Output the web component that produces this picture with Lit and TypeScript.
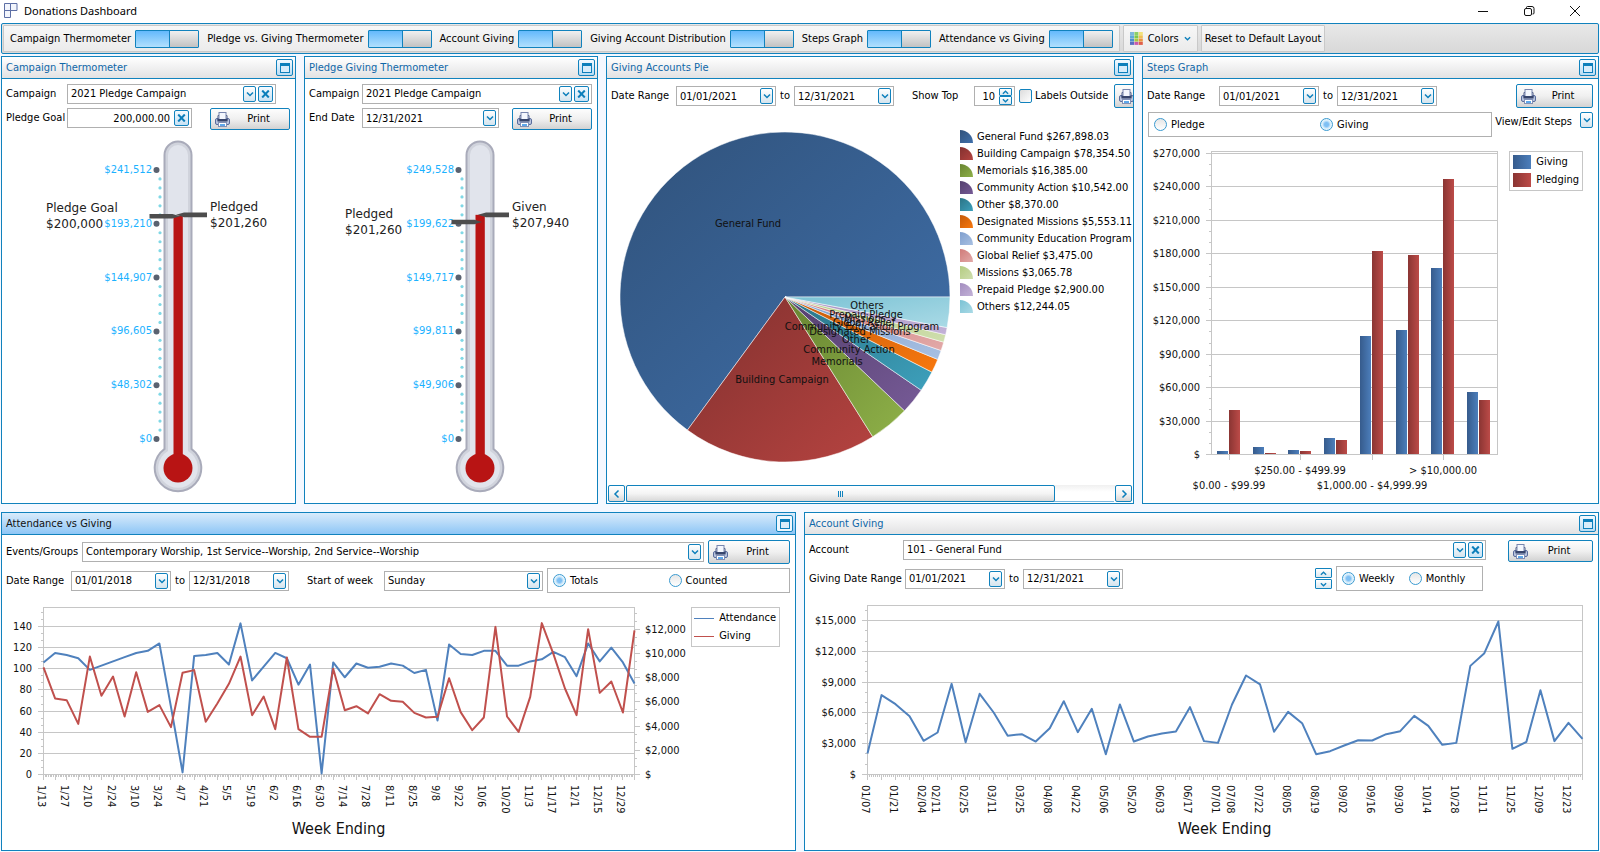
import { LitElement, html, svg, css, nothing, TemplateResult } from "lit";
import { customElement, property, state } from "lit/decorators.js";

const base = css`
  * { box-sizing: border-box; }
  :host {
    display: block;
    font-family: "DejaVu Sans Condensed", "DejaVu Sans", sans-serif;
    font-stretch: condensed;
    font-size: 11px;
    line-height: 14px;
    color: #000;
  }
  text { font-size: 11px; fill: #111; }
  .grid { stroke: #c6c6c6; stroke-width: 1; fill: none; shape-rendering: crispEdges; }
  .title { font-size: 16px; }
`;

/* Redraws its SVG whenever the space given to it changes. */
class ChartElement extends LitElement {
  @state() w = 0;
  @state() h = 0;
  private watcher?: ResizeObserver;

  connectedCallback() {
    super.connectedCallback();
    this.watcher = new ResizeObserver(() => {
      this.w = Math.floor(this.clientWidth);
      this.h = Math.floor(this.clientHeight);
    });
    this.watcher.observe(this);
  }

  disconnectedCallback() {
    this.watcher?.disconnect();
    super.disconnectedCallback();
  }

  draw(): unknown { return nothing; }

  render() {
    if (this.w < 40 || this.h < 40) return nothing;
    return html`<svg class="canvas" width=${this.w} height=${this.h}>${this.draw()}</svg>`;
  }
}

const chartHost = css`
  :host { min-width: 0; min-height: 0; overflow: hidden; }
  .canvas { display: block; }
`;

const money = (v: number) => (v === 0 ? "$" : "$" + v.toLocaleString("en-US"));

@customElement("thermo-chart")
class ThermoChart extends ChartElement {
  @property({ attribute: false }) scale: number[] = [];
  @property({ attribute: false }) left = { label: "", value: 0, x: 0 };
  @property({ attribute: false }) right = { label: "", value: 0 };
  @property({ type: Number }) level = 0;

  static styles = [base, chartHost, css`
    text { font-family: "DejaVu Sans", sans-serif; font-stretch: normal; }
    .scale { font-size: 10px; fill: #1cb2ff; }
    .mark { font-size: 12px; fill: #222; }
    .dot { fill: #5a6270; }
    .tiny { fill: #80d8e6; }
    .flag { fill: #4d4d4d; }
    .mercury { fill: #b81414; }
  `];

  draw() {
    const cx = Math.round(this.w / 2) + 29;
    const top = 36, cap = 21, zero = this.h - 64, bulb = zero + 29;
    const max = this.scale[0];
    const y = (v: number) => zero - (v / max) * (zero - top);
    const step = (zero - top) / 5;
    const shell = (r: number, R: number) => {
      const neck = bulb - Math.sqrt(R * R - r * r);
      return `M${cx - r} ${neck}V${cap}A${r} ${r} 0 0 1 ${cx + r} ${cap}V${neck}A${R} ${R} 0 1 1 ${cx - r} ${neck}Z`;
    };
    const ly = y(this.left.value), ry = y(this.right.value);
    return svg`
      <path d=${shell(14.5, 24.3)} fill="#a9abba"></path>
      <path d=${shell(12.5, 22.3)} fill="#d0d3dc"></path>
      <path d=${shell(10, 19.8)} fill="#e1e4ec"></path>
      ${this.scale.map((v, i) => svg`
        <text class="scale" text-anchor="end" x=${cx - 26} y=${top + step * i + 3}>${v ? money(v) : "$0"}</text>
        <circle class="dot" cx=${cx - 21.5} cy=${top + step * i} r="3"></circle>
        ${i < 5 ? [1, 2, 3, 4, 5].map((k) => svg`<circle class="tiny" cx=${cx - 18} cy=${top + step * (i + k / 6)} r="1.6"></circle>`) : nothing}`)}
      <rect class="mercury" x=${cx - 4.5} y=${y(this.level)} width="9.3" height=${bulb - y(this.level)}></rect>
      <circle class="mercury" cx=${cx} cy=${bulb} r="14.5"></circle>
      <path class="flag" d="M${cx - 28.5} ${ly - 2.3}h23l7.5 2.3l-7.5 2.3h-23z"></path>
      <path class="flag" d="M${cx + 29} ${ry - 2.3}h-23l-8 2.3l8 2.3h23z"></path>
      <text class="mark" x=${cx + this.left.x} y=${ly - 4}>${this.left.label}</text>
      <text class="mark" x=${cx + this.left.x} y=${ly + 12}>${money(this.left.value)}</text>
      <text class="mark" x=${cx + 32} y=${ry - 4}>${this.right.label}</text>
      <text class="mark" x=${cx + 32} y=${ry + 12}>${money(this.right.value)}</text>`;
  }
}

interface Slice { name: string; value: number; from: string; to: string; }

@customElement("pie-chart")
class PieChart extends ChartElement {
  @property({ attribute: false }) slices: Slice[] = [];

  static styles = [base, chartHost, css`
    .slice { stroke: #fff; stroke-opacity: 0.5; stroke-width: 1; }
  `];

  draw() {
    const cx = this.w / 2 + 1, cy = 185, r = Math.min(this.w / 2 - 11, 165);
    const total = this.slices.reduce((a, s) => a + s.value, 0);
    let angle = 0;
    const parts = this.slices.map((s) => {
      const from = angle;
      angle -= (s.value / total) * Math.PI * 2;
      return { s, a: from, b: angle, mid: (from + angle) / 2 };
    });
    const at = (a: number, d: number) => [cx + Math.cos(a) * d, cy + Math.sin(a) * d];
    return svg`
      <defs>${parts.map(({ s }, i) => svg`
        <linearGradient id="g${i}" x1="0" y1="0" x2="1" y2="1">
          <stop offset="0" stop-color=${s.from}></stop><stop offset="1" stop-color=${s.to}></stop>
        </linearGradient>`)}</defs>
      ${parts.map(({ a, b }, i) => {
        const [x1, y1] = at(a, r), [x2, y2] = at(b, r);
        return svg`<path class="slice" fill="url(#g${i})" d="M${cx} ${cy}L${x1} ${y1}A${r} ${r} 0 ${a - b > Math.PI ? 1 : 0} 0 ${x2} ${y2}Z"></path>`;
      })}
      ${parts.map(({ s, mid }) => {
        const [x, y] = at(mid, r / 2);
        return svg`<text text-anchor="middle" x=${Math.round(x)} y=${Math.round(y + 4)}>${s.name}</text>`;
      })}`;
  }
}

@customElement("bar-chart")
class BarChart extends ChartElement {
  @property({ attribute: false }) pairs: number[][] = [];
  @property({ attribute: false }) names: string[] = [];

  static styles = [base, chartHost];

  draw() {
    const l = 68, r = this.w - 2, t = 10, b = this.h - 49;
    const y = (v: number) => Math.round(b - (v / 271800) * (b - t));
    const slot = (r - l) / this.pairs.length;
    const ticks = Array.from({ length: 28 }, (_, i) => i * 10000);
    return svg`
      <defs>
        <linearGradient id="blue"><stop offset="0" stop-color="#365b8c"></stop><stop offset="1" stop-color="#4c7ebb"></stop></linearGradient>
        <linearGradient id="red"><stop offset="0" stop-color="#8a3533"></stop><stop offset="1" stop-color="#bc4b48"></stop></linearGradient>
      </defs>
      <rect class="grid" x=${l + 0.5} y=${t + 0.5} width=${r - l} height=${b - t}></rect>
      ${ticks.map((v, i) => i % 3
        ? svg`<path class="grid" d="M${l - 2} ${y(v) + 0.5}H${l}"></path>`
        : svg`<path class="grid" d="M${l - 5} ${y(v) + 0.5}H${r}"></path>
            <text text-anchor="end" x=${l - 11} y=${y(v) + 4}>${money(v)}</text>`)}
      ${this.pairs.map(([give, pledge], i) => {
        const c = Math.round(l + slot * (i + 0.5));
        return svg`
          <rect fill="url(#blue)" x=${c - 12} y=${y(give)} width="11" height=${b - y(give)}></rect>
          <rect fill="url(#red)" x=${c} y=${y(pledge)} width="11" height=${b - y(pledge)}></rect>
          ${this.names[i] ? svg`
            <path class="grid" d="M${c + 0.5} ${b}v6"></path>
            <text text-anchor="middle" x=${c} y=${b + (i % 4 ? 20 : 35)}>${this.names[i]}</text>` : nothing}`;
      })}`;
  }
}

interface Axis { max: number; step: number; cash: boolean; }

@customElement("week-chart")
class WeekChart extends ChartElement {
  @property({ attribute: false }) first: number[] = [];
  @property({ attribute: false }) second: number[] = [];
  @property({ attribute: false }) axis: Axis = { max: 1, step: 1, cash: false };
  @property({ attribute: false }) rightAxis?: Axis;
  @property({ attribute: false }) weeks: Record<number, string> = {};
  @property({ type: Number }) inset = 41;
  @property({ type: Number }) end = 1;

  static styles = [base, chartHost, css`
    .line { fill: none; stroke-width: 2; stroke-linejoin: round; }
    .a { stroke: #4f81bd; }
    .b { stroke: #c0504d; }
  `];

  private scale(axis: Axis, y: (v: number) => number, l: number, r: number, onRight: boolean) {
    const n = Math.floor((axis.max * 3) / axis.step);
    return Array.from({ length: n + 1 }, (_, i) => {
      const v = (i * axis.step) / 3;
      const py = Math.round(y(v)) + 0.5;
      const major = i % 3 === 0;
      const text = axis.cash ? money(v) : String(v);
      if (onRight)
        return svg`<path class="grid" d="M${r} ${py}h${major ? 6 : 3}"></path>
          ${major ? svg`<text x=${r + 11} y=${py + 3.5}>${text}</text>` : nothing}`;
      return major
        ? svg`<path class="grid" d="M${l - 5} ${py}H${r}"></path><text text-anchor="end" x=${l - 11} y=${py + 3.5}>${text}</text>`
        : svg`<path class="grid" d="M${l - 2} ${py}H${l}"></path>`;
    });
  }

  draw() {
    const l = this.inset, r = this.w - this.end, t = 10, b = this.h - 76;
    const count = this.first.length - 1;
    const x = (i: number) => l + ((r - l) * i) / count;
    const y = (axis: Axis) => (v: number) => b - (v / axis.max) * (b - t);
    const points = (data: number[], axis: Axis) => data.map((v, i) => `${x(i) + 0.5},${y(axis)(v) + 0.5}`).join(" ");
    const days = Array.from({ length: count * 7 + 1 }, (_, i) => i);
    return svg`
      <rect class="grid" x=${l + 0.5} y=${t + 0.5} width=${r - l} height=${b - t}></rect>
      ${this.scale(this.axis, y(this.axis), l, r, false)}
      ${this.rightAxis ? this.scale(this.rightAxis, y(this.rightAxis), l, r, true) : nothing}
      ${days.map((d) => svg`<path class="grid" d="M${Math.round(x(d / 7)) + 0.5} ${b}v${d % 7 ? 3 : 6}"></path>`)}
      <polyline class="line a" points=${points(this.first, this.axis)}></polyline>
      ${this.rightAxis ? svg`<polyline class="line b" points=${points(this.second, this.rightAxis)}></polyline>` : nothing}
      ${Object.entries(this.weeks).map(([i, name]) =>
        svg`<text transform="translate(${Math.round(x(Number(i))) - 5} ${b + 11}) rotate(90)">${name}</text>`)}
      <text class="title" text-anchor="middle" x=${(l + r) / 2} y=${b + 60}>Week Ending</text>`;
  }
}

const SLICES: Slice[] = [
  { name: "General Fund", value: 267898.03, from: "#30527b", to: "#4070ab" },
  { name: "Building Campaign", value: 78354.5, from: "#82312f", to: "#b54340" },
  { name: "Memorials", value: 16385, from: "#688532", to: "#8eb048" },
  { name: "Community Action", value: 10542, from: "#54406e", to: "#765a96" },
  { name: "Other", value: 8370, from: "#2b7486", to: "#3da0bc" },
  { name: "Designated Missions", value: 5553.11, from: "#c45a0a", to: "#f8780e" },
  { name: "Community Education Program", value: 3800, from: "#7f9fce", to: "#a8c0e2" },
  { name: "Global Relief", value: 3475, from: "#d07b79", to: "#e2a9a8" },
  { name: "Missions", value: 3065.78, from: "#b4cc82", to: "#cfdeae" },
  { name: "Prepaid Pledge", value: 2900, from: "#a38dbf", to: "#c3b2d7" },
  { name: "Others", value: 12244.05, from: "#7ac2d4", to: "#aadae6" },
];

const STEPS = [[3000, 39800], [6600, 1200], [3900, 3000], [14600, 12900], [106100, 182400], [111500, 178800], [167100, 247000], [55900, 48700]];
const STEP_NAMES = ["$0.00 - $99.99", "", "$250.00 - $499.99", "", "$1,000.00 - $4,999.99", "", "> $10,000.00", ""];

const ATTENDANCE = [106, 115, 113, 110, 99, 103, 107, 111, 115, 117, 124, 64, 2, 112, 113, 115, 104, 143, 89, 102, 115, 110, 85, 104, 1, 106, 92, 105, 101, 102, 105, 103, 96, 99, 51, 123, 114, 113, 117, 117, 103, 103, 107, 109, 116, 111, 93, 124, 107, 120, 106, 86];
const GIVING = [8840, 6280, 6140, 4180, 9740, 6500, 8090, 4790, 8450, 5170, 5730, 3910, 8400, 8620, 4350, 5860, 7490, 9740, 4900, 6440, 3740, 9660, 3740, 3110, 3110, 8730, 5310, 5640, 5040, 6630, 6080, 6000, 5090, 4710, 4760, 7950, 5150, 3660, 4710, 12190, 4790, 3520, 6410, 12500, 9960, 7100, 4900, 12000, 6740, 7680, 5120, 11900];
const ACCOUNT = [2050, 7730, 6850, 5680, 3280, 4090, 8830, 3150, 7860, 6040, 3770, 3930, 3210, 4510, 7140, 4120, 6400, 1980, 6820, 3210, 3700, 3990, 4190, 6560, 3250, 3080, 6820, 9640, 8770, 4160, 6100, 5000, 1980, 2270, 2820, 3340, 3310, 3930, 4220, 5710, 4740, 2890, 3080, 10580, 11820, 14900, 2500, 3180, 8210, 3250, 5030, 3470];

const WEEKS_2018: Record<number, string> = Object.fromEntries(
  "1/13 1/27 2/10 2/24 3/10 3/24 4/7 4/21 5/5 5/19 6/2 6/16 6/30 7/14 7/28 8/11 8/25 9/8 9/22 10/6 10/20 11/3 11/17 12/1 12/15 12/29"
    .split(" ").map((d, i) => [i * 2, d]));
const WEEKS_2021: Record<number, string> = {
  0: "01/07", 2: "01/21", 4: "02/04", 5: "02/11", 7: "02/25", 9: "03/11", 11: "03/25", 13: "04/08", 15: "04/22",
  17: "05/06", 19: "05/20", 21: "06/03", 23: "06/17", 25: "07/01", 26: "07/08", 28: "07/22", 30: "08/05", 32: "08/19",
  34: "09/02", 36: "09/16", 38: "09/30", 40: "10/14", 42: "10/28", 44: "11/11", 46: "11/25", 48: "12/09", 50: "12/23",
};

const PALETTE = ["#7fb8dc", "#8ccf6a", "#f2e27a", "#5fa8dc", "#7cc84c", "#f0c052", "#4f8fd0", "#a8c840", "#ec9440", "#5a6fc0", "#c85ab0", "#e0604a"];

@customElement("app-root")
class AppRoot extends LitElement {
  static styles = [base, css`
    :host { min-height: 100vh; display: flex; flex-direction: column; background: #f4f8ff; }
    button, input, select { font: inherit; color: inherit; margin: 0; }
    button { padding: 0; }
    svg { display: block; flex: none; }

    .titlebar { display: flex; align-items: center; height: 23px; background: #fff; padding: 0 19px 2px 4px; gap: 6px; }
    .titlebar h1 { flex: 1; margin: 0; font: 400 11px/16px "Noto Sans", sans-serif; }
    .wins { display: flex; gap: 34px; }
    .win { width: 12px; height: 12px; border: 0; background: none; }

    .toolbar { display: flex; gap: 3px; height: 31px; margin: 0 1px; padding: 1px 1px 0; border: 1px solid #1182bd; border-radius: 2px; background: linear-gradient(#e8e8e8, #d8d8d8); }
    .group { display: flex; align-items: center; gap: 8px; height: 27px; padding: 0 6px; border: 1px solid #c9c9c9; border-radius: 1px; background: linear-gradient(#f7f7f7, #ebebeb); }
    .switch { display: flex; align-items: center; gap: 4px; white-space: nowrap; }
    .toggle { appearance: none; width: 64px; height: 18px; border: 1px solid #1182bd; border-radius: 1px;
      background: linear-gradient(#1182bd, #1182bd) 33px 0 / 1px 100% no-repeat, linear-gradient(#f0f0f0, #c2c2c2) 34px 0 / 30px 100% no-repeat, linear-gradient(#64b9fc, #b2e0fd); }
    .tool { display: flex; align-items: center; gap: 5px; height: 27px; padding: 0 6px; border: 1px solid #c9c9c9; border-radius: 1px; background: linear-gradient(#f7f7f7, #ebebeb); white-space: nowrap; }
    .tool.plain { padding: 0 3px; }

    .board { flex: 1; display: grid; grid-template-rows: minmax(448px, 448fr) minmax(339px, 339fr); gap: 8px; padding: 2px 1px 1px; }
    .row { display: grid; gap: 8px; min-height: 0; }
    .upper { grid-template-columns: 295fr 294fr 528fr 457fr; }
    .lower { grid-template-columns: 1fr 1fr; }

    .panel { display: flex; flex-direction: column; min-width: 0; min-height: 0; border: 1px solid #1182bd; background: #fff; }
    .head { display: flex; align-items: center; justify-content: space-between; height: 22px; padding: 0 2px 0 4px; border-bottom: 1px solid #1182bd; background: linear-gradient(#fff, #e2e2e3); }
    .head h2 { margin: 0; font-size: 11px; font-weight: 400; line-height: 14px; color: #0f67a8; }
    .panel.active .head { background: linear-gradient(#d9ebfb, #8ec6f6); }
    .panel.active h2 { color: #111; }
    .max { display: grid; place-items: center; width: 17px; height: 17px; border: 1px solid #1182bd; border-radius: 2px; background: linear-gradient(#f4faff, #b8dcf4); }
    .panel.active .max { background: #eef7fe; }

    .body { flex: 1; display: flex; flex-direction: column; gap: 4px; min-height: 0; padding-top: 5px; }
    .tight { gap: 0; }
    .line { display: flex; align-items: center; padding: 0 5px 0 4px; white-space: nowrap; }
    .line.top { align-items: flex-start; }
    .line.top > label { line-height: 20px; }
    .line.indent { padding-right: 19px; }
    .lab { flex: none; }
    .lab.form-lab { width: 61px; }
    .lab.short { width: 53px; }
    .lab.date { width: 65px; }
    .lab.steps { width: 72px; }
    .lab.events { width: 76px; }
    .lab.account { width: 94px; }
    .lab.giving { width: 96px; }
    .lab.start { width: 95px; padding-left: 18px; }
    .to { width: 18px; padding-left: 4px; flex: none; }
    .push { margin-left: auto; }

    .field { display: flex; align-items: center; gap: 2px; height: 20px; padding: 0 2px 0 3px; border: 1px solid #b0b0b0; background: #fff; min-width: 0; }
    .field.grow { flex: 1; }
    .field.date { flex: none; width: 100px; }
    .field.goal { width: 125px; }
    .field.end { width: 137px; }
    .field.week { flex: none; width: 159px; }
    .field.num { flex: none; width: 41px; }
    .box { flex: 1; width: 0; min-width: 0; height: 16px; padding: 0; border: 0; outline: 0; background: none; appearance: none; }
    .box.right { text-align: right; padding-right: 2px; }
    .mini { display: grid; place-items: center; flex: none; width: 13px; height: 16px; border: 1px solid #1182bd; border-radius: 2px; background: linear-gradient(#fff, #d4e4ee); }
    .mini.wide { width: 15px; background: linear-gradient(#f4faff, #c8e2f4); }

    .print { display: flex; align-items: center; flex: none; width: 80px; height: 22px; padding: 0 0 0 4px; border: 1px solid #1182bd; border-radius: 2px; background: linear-gradient(#fdfdfd, #f0f0f0 50%, #d2d2d2); }
    .print span { flex: 1; text-align: center; padding-right: 2px; }
    .print.tall { height: 24px; }
    .print.big { width: 82px; margin-left: 4px; }
    .print.apart { width: 85px; margin-left: 22px; }
    .print.slim { width: 77px; }

    .spin { display: grid; grid-template-rows: 1fr 1fr; flex: none; width: 13px; height: 17px; }
    .spin.large { width: 17px; height: 21px; gap: 1px; margin-right: 4px; }
    .spin button { display: grid; place-items: center; border: 1px solid #1182bd; border-radius: 1px; background: linear-gradient(#fff, #dbe8f0); min-height: 0; }
    .check { appearance: none; flex: none; width: 13px; height: 14px; margin-left: 4px; border: 1px solid #1182bd; border-radius: 2px; background: linear-gradient(135deg, #dcdcdc, #fff); }

    .radios { display: flex; align-items: center; height: 25px; padding: 0 5px; border: 1px solid #b0b0b0; background: #fff; min-width: 0; }
    .radios label { display: flex; align-items: center; gap: 4px; }
    .line.choices { padding-left: 5px; }
    .radios.steps { flex: 0 1 344px; }
    .radios.steps label, .radios.totals label { flex: 1; }
    .radios.totals { flex: 1; margin-left: 4px; }
    .radios.period { flex: none; width: 147px; gap: 14px; margin-right: 110px; }
    .line.top > .view-label { flex: 1; text-align: right; padding-right: 8px; }
    .radio { appearance: none; flex: none; width: 13px; height: 13px; border: 1px solid #3a9ad0; border-radius: 50%; background: linear-gradient(#e6e6e6, #fff); }
    .radio:checked { background: radial-gradient(circle, #7fc0f4 0 2px, #d4ecfb 4px, #f4fbff 6px); }

    .plot { flex: 1; display: flex; min-height: 0; align-items: stretch; }
    .chart { flex: 1; }
    .legend { flex: none; align-self: flex-start; display: grid; gap: 4px; margin: 10px 15px 0 10px; padding: 3px; border: 1px solid #c6c6c6; list-style: none; }
    .legend.lines { margin-left: 4px; padding-left: 2px; }
    .legend li { display: flex; align-items: center; gap: 5px; line-height: 14px; }
    .swatch { width: 18px; height: 14px; }
    .give { background: linear-gradient(90deg, #365b8c, #4c7ebb); }
    .pledge { background: linear-gradient(90deg, #8a3533, #bc4b48); }
    .dash { width: 20px; height: 1px; background: #4f81bd; }
    .dash.red { background: #c0504d; }

    .view { flex: 1; overflow: hidden; min-height: 0; margin-left: 1px; display: flex; }
    .sheet { flex: none; width: 598px; display: flex; flex-direction: column; gap: 4px; }
    .sheet .line { padding: 0 0 0 3px; }
    .sheet .print { width: 88px; margin-left: 7px; }
    .keys { flex: none; width: 246px; margin: 16px 0 0; padding: 0; list-style: none; }
    .keys li { display: flex; align-items: center; gap: 4px; height: 17px; white-space: nowrap; }
    .top-label { padding-left: 18px; width: 80px; }
    .outside { padding-left: 3px; width: 75px; flex: none; }
    .scroll { display: flex; gap: 1px; height: 17px; margin: 0 1px 1px; background: linear-gradient(#f0f0f0, #fff 40%); }
    .arrow, .thumb { display: grid; place-items: center; border: 1px solid #1182bd; border-radius: 2px; background: linear-gradient(#fff, #f4f4f4 50%, #d8d8d8); }
    .arrow { width: 17px; }
    .track { flex: 1; border-bottom: 1px solid #7cb8e0; display: flex; }
    .thumb { width: 88%; height: 17px; }
  `];

  chevron(dir: "down" | "up" | "left" | "right" = "down", size = 8) {
    const d = { down: "M1 2.5l3 3l3-3", up: "M1 5.5l3-3l3 3", left: "M5.5 0.5l-3.5 3.5l3.5 3.5", right: "M2.5 0.5l3.5 3.5l-3.5 3.5" }[dir];
    return html`<svg width=${size} height=${size} viewBox="0 0 8 8" fill="none" stroke="#0d7fbb" stroke-width="1.5"><path d=${d}></path></svg>`;
  }

  drop = (label: string) => html`<button class="mini" aria-label=${label}>${this.chevron()}</button>`;

  clear = (label: string) => html`<button class="mini wide" aria-label=${label}>
    <svg width="9" height="8" viewBox="0 0 9 8" fill="none" stroke="#0d7fbb" stroke-width="2"><path d="M1.2 0.5l6.6 7M7.8 0.5l-6.6 7"></path></svg>
  </button>`;

  print = (size = "") => html`<button class="print ${size}">
    <svg width="15" height="15" viewBox="0 0 15 15">
      <rect x="0.5" y="6.5" width="14" height="6" rx="1.5" fill="#b9c4de" stroke="#5a6c9c"></rect>
      <path d="M3 8.5V3.5h1M12 8.5V3.5h-1" stroke="#46557f" fill="none"></path>
      <rect x="4" y="0.5" width="7" height="7" fill="#f4f7fd" stroke="#7886ae"></rect>
      <rect x="2.5" y="7" width="10" height="2.5" fill="#37456c"></rect>
      <rect x="3.5" y="10.5" width="8" height="4" fill="#fff" stroke="#8290b6"></rect>
      <rect x="5" y="12" width="5" height="2" fill="#5fa8ea"></rect>
    </svg><span>Print</span></button>`;

  date(id: string, label: string, value: string, size = "date") {
    return html`<div class="field ${size}"><input class="box" id=${id} aria-label=${label} .value=${value}>${this.drop("Open calendar")}</div>`;
  }

  pick(id: string, value: string, size: string, clearable: boolean) {
    return html`<div class="field ${size}"><select class="box" id=${id}><option>${value}</option></select>
      ${this.drop("Open list")}${clearable ? this.clear("Clear") : nothing}</div>`;
  }

  radio = (group: string, label: string, on: boolean) =>
    html`<label><input class="radio" type="radio" name=${group} ?checked=${on}>${label}</label>`;

  spin = (size = "") => html`<div class="spin ${size}">
    <button aria-label="Increase">${this.chevron("up", 7)}</button><button aria-label="Decrease">${this.chevron("down", 7)}</button></div>`;

  panel(title: string, body: TemplateResult, active = false) {
    return html`<section class="panel ${active ? "active" : ""}">
      <header class="head"><h2>${title}</h2>
        <button class="max" aria-label="Maximize ${title}">
          <svg width="10" height="10" viewBox="0 0 10 10"><rect x="0.5" y="0.5" width="9" height="9" fill="#d8ecfa" stroke="#0d7fbb"></rect><rect width="10" height="3" fill="#0d7fbb"></rect></svg>
        </button>
      </header>${body}</section>`;
  }

  toggle = (id: string, label: string) => html`<div class="switch"><label for=${id}>${label}</label><input class="toggle" id=${id} type="checkbox" role="switch" checked></div>`;

  render() {
    return html`
      <header class="titlebar">
        <svg width="14" height="15" viewBox="0 0 14 15" fill="#f2f5fc" stroke="#5d6fa5"><path d="M0.5 0.5h6v7h-6zM6.5 0.5h6.5v7h-6.5zM0.5 7.5h6v7h-6z"></path></svg>
        <h1>Donations Dashboard</h1>
        <div class="wins">
          <button class="win" aria-label="Minimize"><svg width="12" height="12" stroke="#111"><path d="M1 6.5h10"></path></svg></button>
          <button class="win" aria-label="Restore"><svg width="12" height="12" fill="none" stroke="#111"><rect x="1.5" y="3.5" width="7" height="7" rx="1.5"></rect><path d="M3.5 3V2.5q0-1 1-1h4.500q2 0 2 2v4.500q0 1-1 1h-.5"></path></svg></button>
          <button class="win" aria-label="Close"><svg width="12" height="12" stroke="#111"><path d="M1 1l10 10M11 1l-10 10"></path></svg></button>
        </div>
      </header>

      <nav class="toolbar" aria-label="Dashboard">
        <div class="group">
          ${this.toggle("t1", "Campaign Thermometer")}
          ${this.toggle("t2", "Pledge vs. Giving Thermometer")}
          ${this.toggle("t3", "Account Giving")}
          ${this.toggle("t4", "Giving Account Distribution")}
          ${this.toggle("t5", "Steps Graph")}
          ${this.toggle("t6", "Attendance vs Giving")}
        </div>
        <button class="tool">
          <svg width="13" height="13" viewBox="0 0 13 13">${PALETTE.map((c, i) => svg`<rect x=${(i % 3) * 4.4} y=${Math.floor(i / 3) * 3.3} width="4" height="3" fill=${c}></rect>`)}</svg>
          Colors ${this.chevron("down", 7)}
        </button>
        <button class="tool plain">Reset to Default Layout</button>
      </nav>

      <main class="board">
        <div class="row upper">
          ${this.panel("Campaign Thermometer", html`<div class="body">
            <div class="line indent"><label class="lab form-lab" for="c1">Campaign</label>${this.pick("c1", "2021 Pledge Campaign", "grow", true)}</div>
            <div class="line top"><label class="lab form-lab" for="goal">Pledge Goal</label>
              <div class="field goal"><input class="box right" id="goal" .value=${"200,000.00"}>${this.clear("Clear goal")}</div>
              <div class="push">${this.print()}</div></div>
            <thermo-chart class="chart" .scale=${[241512, 193210, 144907, 96605, 48302, 0]} .level=${200400}
              .left=${{ label: "Pledge Goal", value: 200000, x: -132 }} .right=${{ label: "Pledged", value: 201260 }}></thermo-chart>
          </div>`)}
          ${this.panel("Pledge Giving Thermometer", html`<div class="body">
            <div class="line"><label class="lab short" for="c2">Campaign</label>${this.pick("c2", "2021 Pledge Campaign", "grow", true)}</div>
            <div class="line top"><label class="lab short" for="end">End Date</label>
              ${this.date("end", "End Date", "12/31/2021", "end")}
              <div class="push">${this.print()}</div></div>
            <thermo-chart class="chart" .scale=${[249528, 199622, 149717, 99811, 49906, 0]} .level=${207940}
              .left=${{ label: "Pledged", value: 201260, x: -135 }} .right=${{ label: "Given", value: 207940 }}></thermo-chart>
          </div>`)}
          ${this.panel("Giving Accounts Pie", html`<div class="body tight">
            <div class="view"><div class="sheet">
              <div class="line">
                <label class="lab date" for="p1">Date Range</label>${this.date("p1", "From", "01/01/2021")}
                <span class="to">to</span>${this.date("p2", "To", "12/31/2021")}
                <label class="lab top-label" for="top">Show Top</label>
                <div class="field num"><input class="box right" id="top" .value=${"10"}>${this.spin()}</div>
                <input class="check" type="checkbox" id="outside"><label class="outside" for="outside">Labels Outside</label>
                ${this.print("tall")}
              </div>
              <div class="plot">
                <pie-chart class="chart" .slices=${SLICES}></pie-chart>
                <ul class="keys">${SLICES.map((s, i) => html`<li>
                  <svg width="13" height="13"><defs><linearGradient id="k${i}" x1="0" y1="0" x2="1" y2="1"><stop offset="0" stop-color=${s.from}></stop><stop offset="1" stop-color=${s.to}></stop></linearGradient></defs>
                    <path d="M0 0A13 13 0 0 1 13 13H0z" fill="url(#k${i})"></path></svg>
                  ${s.name} $${(s.value).toLocaleString("en-US", { minimumFractionDigits: 2 })}</li>`)}</ul>
              </div>
            </div></div>
            <div class="scroll">
              <button class="arrow" aria-label="Scroll left">${this.chevron("left")}</button>
              <div class="track"><div class="thumb"><svg width="6" height="6" stroke="#1182bd"><path d="M0.5 0v6M2.5 0v6M4.5 0v6"></path></svg></div></div>
              <button class="arrow" aria-label="Scroll right">${this.chevron("right")}</button>
            </div>
          </div>`)}
          ${this.panel("Steps Graph", html`<div class="body">
            <div class="line">
              <label class="lab steps" for="s1">Date Range</label>${this.date("s1", "From", "01/01/2021")}
              <span class="to">to</span>${this.date("s2", "To", "12/31/2021")}
              <div class="push">${this.print("tall slim")}</div>
            </div>
            <div class="line top choices">
              <div class="radios steps" role="radiogroup" aria-label="Steps source">${this.radio("steps", "Pledge", false)}${this.radio("steps", "Giving", true)}</div>
              <label class="view-label" for="edit">View/Edit Steps</label>
              <button class="mini" id="edit">${this.chevron()}</button>
            </div>
            <div class="plot">
              <bar-chart class="chart" .pairs=${STEPS} .names=${STEP_NAMES}></bar-chart>
              <ul class="legend"><li><span class="swatch give"></span>Giving</li><li><span class="swatch pledge"></span>Pledging</li></ul>
            </div>
          </div>`)}
        </div>

        <div class="row lower">
          ${this.panel("Attendance vs Giving", html`<div class="body">
            <div class="line"><label class="lab events" for="ev">Events/Groups</label>
              ${this.pick("ev", "Contemporary Worship, 1st Service--Worship, 2nd Service--Worship", "grow", false)}
              ${this.print("tall big")}</div>
            <div class="line">
              <label class="lab date" for="a1">Date Range</label>${this.date("a1", "From", "01/01/2018")}
              <span class="to">to</span>${this.date("a2", "To", "12/31/2018")}
              <label class="lab start" for="sow">Start of week</label>${this.pick("sow", "Sunday", "week", false)}
              <div class="radios totals" role="radiogroup" aria-label="Attendance">${this.radio("att", "Totals", true)}${this.radio("att", "Counted", false)}</div>
            </div>
            <div class="plot">
              <week-chart class="chart" .first=${ATTENDANCE} .second=${GIVING} .weeks=${WEEKS_2018} .inset=${41} .end=${53}
                .axis=${{ max: 158, step: 20, cash: false }} .rightAxis=${{ max: 13790, step: 2000, cash: true }}></week-chart>
              <ul class="legend lines"><li><span class="dash"></span>Attendance</li><li><span class="dash red"></span>Giving</li></ul>
            </div>
          </div>`, true)}
          ${this.panel("Account Giving", html`<div class="body">
            <div class="line top"><label class="lab account" for="ac">Account</label>
              ${this.pick("ac", "101 - General Fund", "grow", true)}${this.print("apart")}</div>
            <div class="line">
              <label class="lab giving" for="g1">Giving Date Range</label>${this.date("g1", "From", "01/01/2021")}
              <span class="to">to</span>${this.date("g2", "To", "12/31/2021")}
              <div class="push">${this.spin("large")}</div>
              <div class="radios period" role="radiogroup" aria-label="Period">${this.radio("per", "Weekly", true)}${this.radio("per", "Monthly", false)}</div>
            </div>
            <div class="plot">
              <week-chart class="chart" .first=${ACCOUNT} .weeks=${WEEKS_2021} .inset=${62} .end=${16}
                .axis=${{ max: 16460, step: 3000, cash: true }}></week-chart>
            </div>
          </div>`)}
        </div>
      </main>`;
  }
}
